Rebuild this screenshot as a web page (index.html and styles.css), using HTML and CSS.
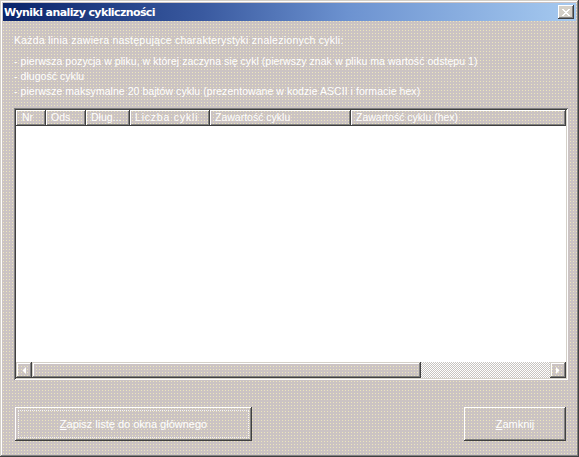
FILE: index.html
```html
<!DOCTYPE html>
<html lang="pl">
<head>
<meta charset="utf-8">
<title>Wyniki analizy cykliczności</title>
<link rel="stylesheet" href="styles.css">
</head>
<body>
<div class="window">
  <div class="titlebar">
    <span class="title">Wyniki analizy cykliczności</span>
    <div class="close">
      <svg width="8" height="7" viewBox="0 0 8 7"><path d="M0 0h2v1h1v1h2v-1h1v-1h2v1h-1v1h-1v1h-1v1h1v1h1v1h1v1h-2v-1h-1v-1h-2v1h-1v1h-2v-1h1v-1h1v-1h1v-1h-1v-1h-1v-1h-1z" fill="#ffffff"/></svg>
    </div>
  </div>
  <div class="content">
    <div class="desc">
      <p class="lead">Każda linia zawiera następujące charakterystyki znalezionych cykli:</p>
      <p>- pierwsza pozycja w pliku, w której zaczyna się cykl (pierwszy znak w pliku ma wartość odstępu 1)</p>
      <p>- długość cyklu</p>
      <p>- pierwsze maksymalne 20 bajtów cyklu (prezentowane w kodzie ASCII i formacie hex)</p>
    </div>
    <div class="list">
      <div class="header">
        <div class="col c-nr">Nr</div>
        <div class="col c-ods">Ods...</div>
        <div class="col c-dl">Dług...</div>
        <div class="col c-lc">Liczba cykli</div>
        <div class="col c-zc">Zawartość cyklu</div>
        <div class="col c-hex">Zawartość cyklu (hex)</div>
      </div>
      <div class="rows"></div>
      <div class="hscroll">
        <div class="sbtn"><svg width="4" height="7" viewBox="0 0 4 7"><path d="M4 0v7L0.5 3.5z" fill="#ffffff"/></svg></div>
        <div class="thumb"></div>
        <div class="track"></div>
        <div class="sbtn"><svg width="4" height="7" viewBox="0 0 4 7"><path d="M0 0v7l3.5-3.5z" fill="#ffffff"/></svg></div>
      </div>
    </div>
    <div class="buttons">
      <div class="btn btn-save"><span class="focus"><u>Z</u>apisz listę do okna głównego</span></div>
      <div class="btn btn-close"><span><u>Z</u>amknij</span></div>
    </div>
  </div>
</div>
</body>
</html>
```
FILE: styles.css
```css
html, body {
  margin: 0;
  padding: 0;
  background: #c9c1c1;
}
body {
  font-family: "Liberation Sans", Arial, sans-serif;
  font-size: 10.5px;
  color: #ffffff;
}
.window {
  width: 579px;
  height: 457px;
  box-sizing: border-box;
  padding: 3px;
  background: conic-gradient(at 1px 1px, #0000 75%, #ece6bc 0) 0 0 / 3px 3px, #cbc3c3;
  box-shadow: inset -1px -1px #404040, inset 1px 1px #d4d0c8, inset -2px -2px #808080, inset 2px 2px #ffffff;
  display: flex;
  flex-direction: column;
}
.titlebar {
  height: 18px;
  display: flex;
  align-items: center;
  justify-content: space-between;
  background: linear-gradient(90deg, #0a246a 0%, #3a5aa0 35%, #6c92d0 60%, #a6caf0 100%);
  padding: 0 2px 0 1px;
}
.title {
  font-family: "DejaVu Sans", Verdana, sans-serif;
  font-weight: bold;
  font-size: 11px;
  letter-spacing: -0.6px;
  color: #ffffff;
}
.close {
  width: 16px;
  height: 14px;
  box-sizing: border-box;
  background: #d4d0c8;
  box-shadow: inset -1px -1px #404040, inset 1px 1px #ffffff, inset -2px -2px #808080;
  display: flex;
  align-items: center;
  justify-content: center;
}
.content {
  flex: 1;
  display: flex;
  flex-direction: column;
  padding: 12px 8px 0 11px;
}
.desc p {
  margin: 0;
  line-height: 15px;
  white-space: nowrap;
  letter-spacing: 0.05px;
}
.desc p.lead {
  margin-bottom: 6px;
  letter-spacing: 0.25px;
}
.list {
  margin-top: 9px;
  height: 272px;
  box-sizing: border-box;
  padding: 2px;
  box-shadow: inset 1px 1px #808080, inset -1px -1px #ffffff, inset 2px 2px #404040, inset -2px -2px #d4d0c8;
  display: flex;
  flex-direction: column;
}
.header {
  height: 16px;
  display: flex;
}
.col {
  height: 16px;
  box-sizing: border-box;
  padding-left: 5px;
  line-height: 15px;
  white-space: nowrap;
  overflow: hidden;
  box-shadow: inset -1px -1px #404040, inset 1px 1px #ffffff, inset -2px -2px #808080;
}
.c-nr { width: 30px; padding-left: 6px; }
.c-ods { width: 40px; }
.c-dl { width: 44px; }
.c-lc { width: 80px; letter-spacing: 0.8px; }
.c-zc { width: 141px; }
.c-hex { width: 215px; }
.rows {
  flex: 1;
  background: #ffffff;
}
.hscroll {
  height: 16px;
  display: flex;
}
.sbtn {
  width: 16px;
  height: 16px;
  box-sizing: border-box;
  box-shadow: inset -1px -1px #404040, inset 1px 1px #d4d0c8, inset -2px -2px #808080, inset 2px 2px #ffffff;
  display: flex;
  align-items: center;
  justify-content: center;
}
.thumb {
  width: 389px;
  box-shadow: inset -1px -1px #404040, inset 1px 1px #d4d0c8, inset -2px -2px #808080, inset 2px 2px #ffffff;
}
.track {
  flex: 1;
  background: repeating-conic-gradient(#ffffff 0 25%, #c8c4c0 0 50%) 0 0 / 2px 2px;
}
.buttons {
  margin-top: 27px;
  display: flex;
  justify-content: space-between;
  padding: 0 2px 0 1px;
}
.btn {
  height: 34px;
  box-sizing: border-box;
  display: flex;
  align-items: center;
  justify-content: center;
  box-shadow: inset -1px -1px #404040, inset 1px 1px #ffffff, inset -2px -2px #808080;
  font-size: 11px;
}
.btn u {
  text-decoration-thickness: 1px;
  text-underline-offset: 1px;
}
.btn-save {
  width: 237px;
  padding: 3px;
}
.btn-save .focus {
  flex: 1;
  align-self: stretch;
  display: flex;
  align-items: center;
  justify-content: center;
  outline: 1px dotted #f4f4f4;
  outline-offset: -1px;
}
.btn-close {
  width: 102px;
}
```
